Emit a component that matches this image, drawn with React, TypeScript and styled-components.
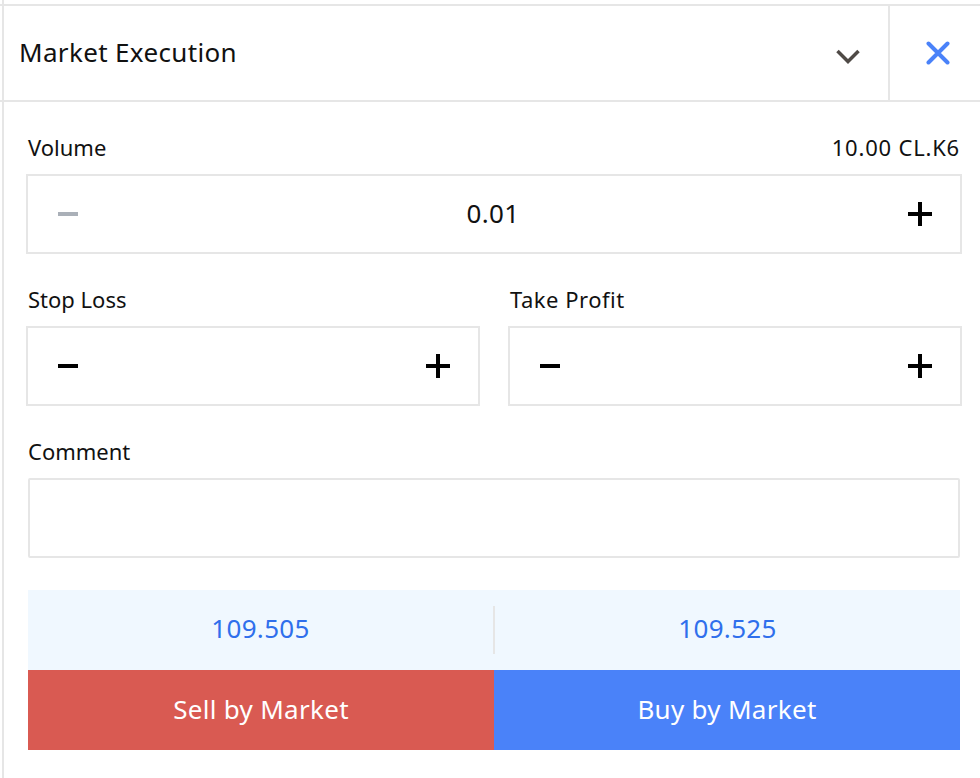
import React from "react";
import styled, { createGlobalStyle } from "styled-components";

const Global = createGlobalStyle`
  html, body { margin: 0; padding: 0; background: #fff; }
  * { box-sizing: border-box; }
`;

const Panel = styled.div`
  width: 980px;
  height: 778px;
  padding-top: 4px;
  background: linear-gradient(#e6e6e6, #e6e6e6) 2px 0 / 2px 100% no-repeat #fff;
  color: #111;
  font-family: "Noto Sans", "DejaVu Sans", sans-serif;
  font-size: 22px;
  overflow: hidden;
`;

const Header = styled.div`
  display: flex;
  align-items: stretch;
  height: 98px;
  border-top: 2px solid #e6e6e6;
  border-bottom: 2px solid #e6e6e6;
`;

const Title = styled.div`
  flex: 1;
  display: flex;
  align-items: center;
  padding: 0 0 2px 19px;
  font-size: 26px;
  letter-spacing: 0.35px;
`;

const HeaderButton = styled.div<{ $w: number; $left?: number; $top?: number }>`
  display: flex;
  align-items: center;
  justify-content: center;
  width: ${(p) => p.$w}px;
  padding-left: ${(p) => p.$left || 0}px;
  padding-top: ${(p) => p.$top || 0}px;
`;

const Divider = styled.div`
  width: 2px;
  background: #e6e6e6;
`;

const Body = styled.div`
  padding: 0 20px 0 28px;
`;

const LabelRow = styled.div`
  display: flex;
  justify-content: space-between;
  align-items: center;
  height: 30px;
  margin-top: 31px;
  padding-bottom: 2px;
`;

const Label = styled.span<{ $track?: number }>`
  letter-spacing: ${(p) => p.$track || 0}px;
`;

const Stepper = styled.div`
  display: flex;
  align-items: center;
  justify-content: space-between;
  height: 80px;
  margin-top: 11px;
  padding: 0 28px 0 30px;
  border: 2px solid #e6e6e6;
  font-size: 26px;
`;

const VolumeStepper = styled(Stepper)`
  margin-left: -2px;
  margin-right: -2px;
`;

const StepValue = styled.span`
  padding-bottom: 2px;
  letter-spacing: 0.4px;
`;

const Pair = styled.div`
  display: grid;
  grid-template-columns: 454px 454px;
  gap: 28px;
  margin: 0 -2px;
`;

const Column = styled.div`
  & > ${LabelRow} {
    padding-left: 2px;
  }
`;

const Comment = styled.div`
  height: 80px;
  margin-top: 11px;
  border: 2px solid #e6e6e6;
  border-radius: 2px;
`;

const Prices = styled.div`
  display: grid;
  grid-template-columns: 465px 1fr;
  align-items: center;
  height: 80px;
  margin-top: 32px;
  background: #f0f8ff;
  color: #2f6fec;
  font-size: 26px;
`;

const Price = styled.div<{ $split?: boolean }>`
  display: flex;
  align-items: center;
  justify-content: center;
  height: 48px;
  padding-bottom: 5px;
  letter-spacing: 0.3px;
  ${(p) => p.$split && "border-left: 2px solid #e6e6e6;"}
`;

const Actions = styled.div`
  display: grid;
  grid-template-columns: 1fr 1fr;
  height: 80px;
`;

const Action = styled.div<{ $bg: string }>`
  display: flex;
  align-items: center;
  justify-content: center;
  padding-bottom: 2px;
  background: ${(p) => p.$bg};
  color: #fff;
  font-size: 26px;
  letter-spacing: 0.3px;
`;

const Minus = ({ color = "#000" }: { color?: string }) => (
  <svg width="20" height="24" viewBox="0 0 20 24">
    <rect x="0" y="10" width="20" height="4" fill={color} />
  </svg>
);

const Plus = () => (
  <svg width="24" height="24" viewBox="0 0 24 24">
    <rect x="0" y="10" width="24" height="4" fill="#000" />
    <rect x="10" y="0" width="4" height="24" fill="#000" />
  </svg>
);

export default function App() {
  return (
    <Panel>
      <Global />
      <Header>
        <Title>Market Execution</Title>
        <HeaderButton $w={88} $left={7} $top={7}>
          <svg width="24" height="15" viewBox="0 0 24 15">
            <path d="M1.5 2l10.5 10.5L22.5 2" fill="none" stroke="#4f4a46" strokeWidth="3.5" />
          </svg>
        </HeaderButton>
        <Divider />
        <HeaderButton $w={90} $left={6}>
          <svg width="24" height="24" viewBox="0 0 24 24">
            <path d="M2.5 2.5l19 19M21.5 2.5l-19 19" fill="none" stroke="#4a82f9" strokeWidth="4" strokeLinecap="round" />
          </svg>
        </HeaderButton>
      </Header>
      <Body>
        <LabelRow>
          <Label>Volume</Label>
          <Label $track={0.8}>10.00 CL.K6</Label>
        </LabelRow>
        <VolumeStepper>
          <Minus color="#aab0b8" />
          <StepValue>0.01</StepValue>
          <Plus />
        </VolumeStepper>
        <Pair>
          <Column>
            <LabelRow>
              <Label>Stop Loss</Label>
            </LabelRow>
            <Stepper>
              <Minus />
              <Plus />
            </Stepper>
          </Column>
          <Column>
            <LabelRow>
              <Label $track={0.5}>Take Profit</Label>
            </LabelRow>
            <Stepper>
              <Minus />
              <Plus />
            </Stepper>
          </Column>
        </Pair>
        <LabelRow>
          <Label>Comment</Label>
        </LabelRow>
        <Comment />
        <Prices>
          <Price>109.505</Price>
          <Price $split>109.525</Price>
        </Prices>
        <Actions>
          <Action $bg="#d95a52">Sell by Market</Action>
          <Action $bg="#4a82f9">Buy by Market</Action>
        </Actions>
      </Body>
    </Panel>
  );
}
